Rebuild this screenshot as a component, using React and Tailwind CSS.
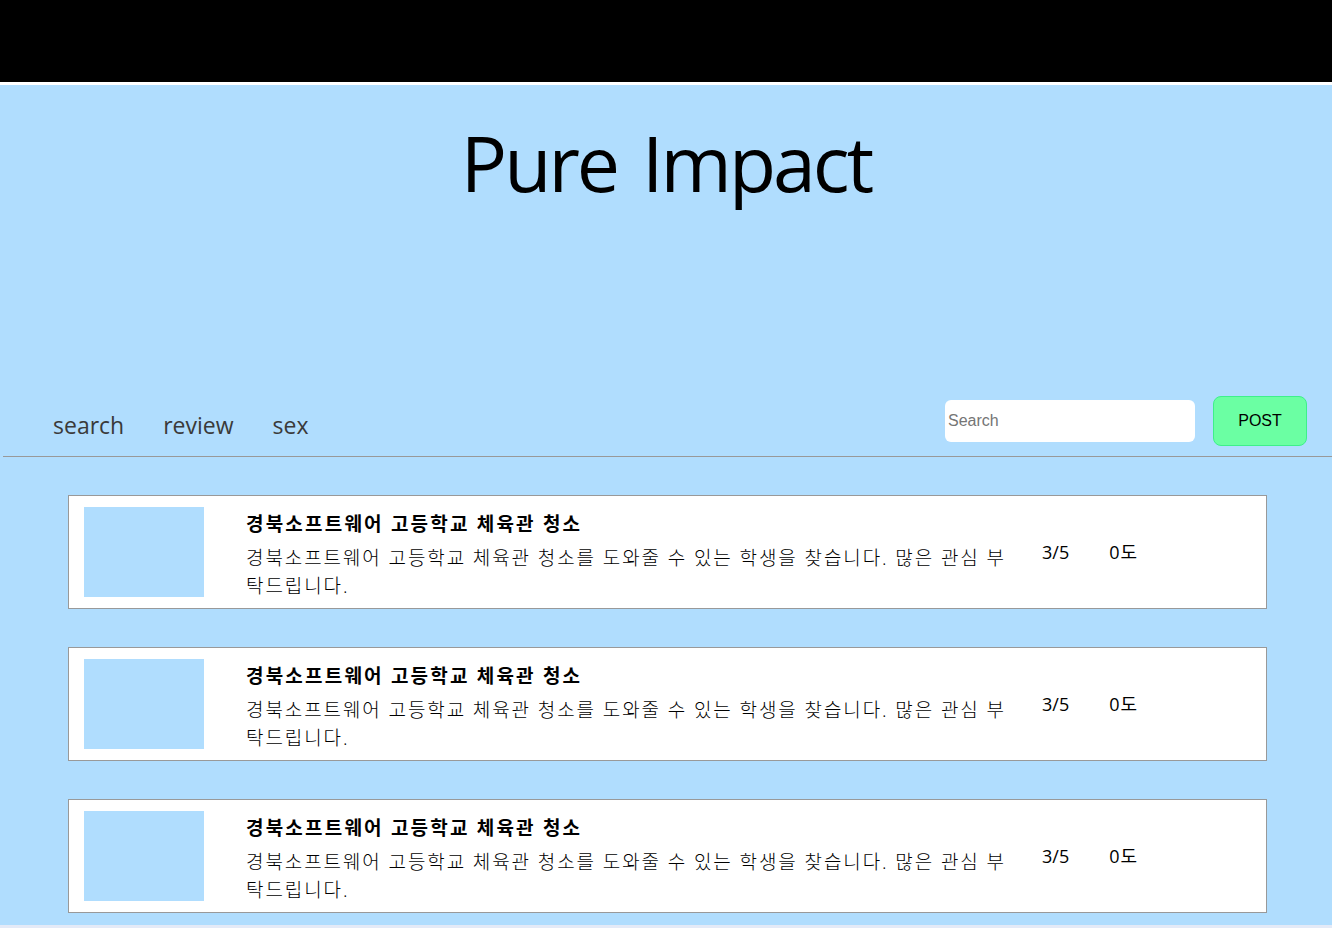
const POSTS = [1, 2, 3].map((id) => ({
  id,
  title: '경북소프트웨어 고등학교 체육관 청소',
  body: '경북소프트웨어 고등학교 체육관 청소를 도와줄 수 있는 학생을 찾습니다. 많은 관심 부탁드립니다.',
  people: '3/5',
  temp: '0도',
}));

const FONT = "font-['Open_Sans','Noto_Sans_CJK_KR',sans-serif]";

function PostCard({ post }) {
  return (
    <div className="flex h-[114px] items-start border border-[#999] bg-white px-[15px] py-[11px]">
      <div className="h-[90px] w-[120px] shrink-0 bg-[#b0ddfe]" />
      <div className="ml-[42px] w-[775px] shrink-0 pt-[3px]">
        <p className="text-[19px] leading-[28px] font-bold tracking-[2.2px] text-black">{post.title}</p>
        <p className="mt-[6px] text-[19px] leading-[28px] font-light tracking-[1.9px] text-black">{post.body}</p>
      </div>
      <span className="ml-[21px] self-center text-[18px] leading-[28px] text-black">{post.people}</span>
      <span className="ml-[40px] self-center text-[18px] leading-[28px] tracking-[1px] text-black">{post.temp}</span>
    </div>
  );
}

export default function App() {
  return (
    <div className={`min-h-[928px] bg-[#e4eaf7] ${FONT}`}>
      <div className="h-[82px] bg-black" />
      <div className="h-[3px] bg-white" />
      <div className="bg-[#b0ddfe] pb-[12px]">
        <h1 className="pt-[39px] text-center text-[77px] leading-[78px] font-normal tracking-[-3px] [word-spacing:8px] text-black">
          Pure Impact
        </h1>

        <div className="mt-[194px] flex h-[50px] items-center justify-between pr-[25px]">
          <nav className="flex gap-[39px] pt-[8px] pl-[53px] text-[23px] leading-[32px] text-[#3a3a3a]">
            <a>search</a>
            <a>review</a>
            <a>sex</a>
          </nav>
          <div className="flex items-center gap-[18px]">
            <input
              placeholder="Search"
              className="h-[42px] w-[250px] rounded-md bg-white px-[3px] font-['Liberation_Sans',sans-serif] text-[16px] text-black outline-none placeholder:text-[#757575]"
            />
            <button className="h-[50px] w-[94px] rounded-lg border border-[#3ef08a] bg-[#6bffa3] font-['Liberation_Sans',sans-serif] text-[16px] text-black">
              POST
            </button>
          </div>
        </div>

        <div className="mt-[10px] ml-[3px] h-px bg-[#999]" />

        <div className="mx-[68px] mt-[38px] flex w-[1199px] flex-col gap-[38px]">
          {POSTS.map((p) => (
            <PostCard key={p.id} post={p} />
          ))}
        </div>
      </div>
    </div>
  );
}
